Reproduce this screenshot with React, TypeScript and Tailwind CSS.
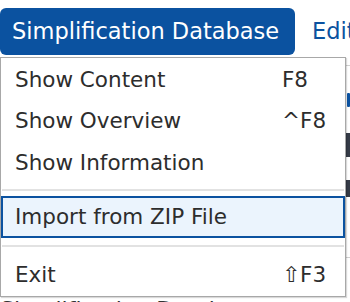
import React from "react";

const font = { fontFamily: '"DejaVu Sans", "Open Sans", sans-serif' };

function Item({ label, shortcut }: { label: string; shortcut?: string }) {
  return (
    <div className="grid grid-cols-[267px_1fr] items-center h-[42px] pl-[14px] text-[21.5px] text-[#2d2d2d]">
      <span>{label}</span>
      <span>{shortcut}</span>
    </div>
  );
}

export default function App() {
  return (
    <div
      className="relative w-[350px] h-[302px] overflow-hidden bg-white flex flex-col"
      style={font}
    >
      {/* menubar */}
      <div className="flex items-center pt-[8px] h-[55px] shrink-0">
        <div className="h-[47px] w-[295px] shrink-0 rounded-[6px] bg-[#0b52a0] text-white text-[22.5px] pl-[12px] flex items-center whitespace-nowrap">
          Simplification Database
        </div>
        <div className="ml-[17px] text-[22.5px] text-[#0b52a0] whitespace-nowrap">Edit</div>
      </div>

      {/* background page content */}
      <div className="flex flex-1">
        <div className="w-[346px] flex flex-col">
          <div className="h-[240px] shrink-0" />
          <div className="text-[22px] leading-[30px] text-[#333] whitespace-nowrap">
            Simplification Database
          </div>
        </div>
        <div className="flex-1 flex flex-col">
          <div className="h-[10px]" />
          <div className="h-[1px] bg-[#d0d0d0]" />
          <div className="h-[27px]" />
          <div className="h-[14px] w-[3px] ml-[1px] bg-[#0b52a0] rounded-[1px]" />
          <div className="h-[26px]" />
          <div className="h-[24px] bg-[#353b47]" />
          <div className="h-[23px]" />
          <div className="h-[17px] bg-[#353b47]" />
          <div className="h-[60px]" />
          <div className="h-[1px] bg-[#d0d0d0]" />
        </div>
      </div>

      {/* dropdown menu */}
      <div className="absolute left-0 top-[57px] w-[346px] h-[240px] bg-white border border-[#a8a8a8] shadow-[1px_1px_1px_rgba(0,0,0,0.15)] flex flex-col">
        <div className="h-[1px]" />
        <Item label="Show Content" shortcut="F8" />
        <Item label="Show Overview" shortcut="^F8" />
        <Item label="Show Information" />
        <div className="h-[13px] flex items-center px-[1px]">
          <div className="h-[2px] w-full bg-[#e2e2e2]" />
        </div>
        <div className="border-2 border-[#0b52a0] bg-[#ebf4fd] h-[42px] flex items-center pl-[12px] text-[21.5px] text-[#2d2d2d]">
          Import from ZIP File
        </div>
        <div className="h-[16px] flex items-center px-[1px]">
          <div className="h-[2px] w-full bg-[#e2e2e2]" />
        </div>
        <div className="h-[1px]" />
        <Item label="Exit" shortcut="⇧F3" />
      </div>
    </div>
  );
}
